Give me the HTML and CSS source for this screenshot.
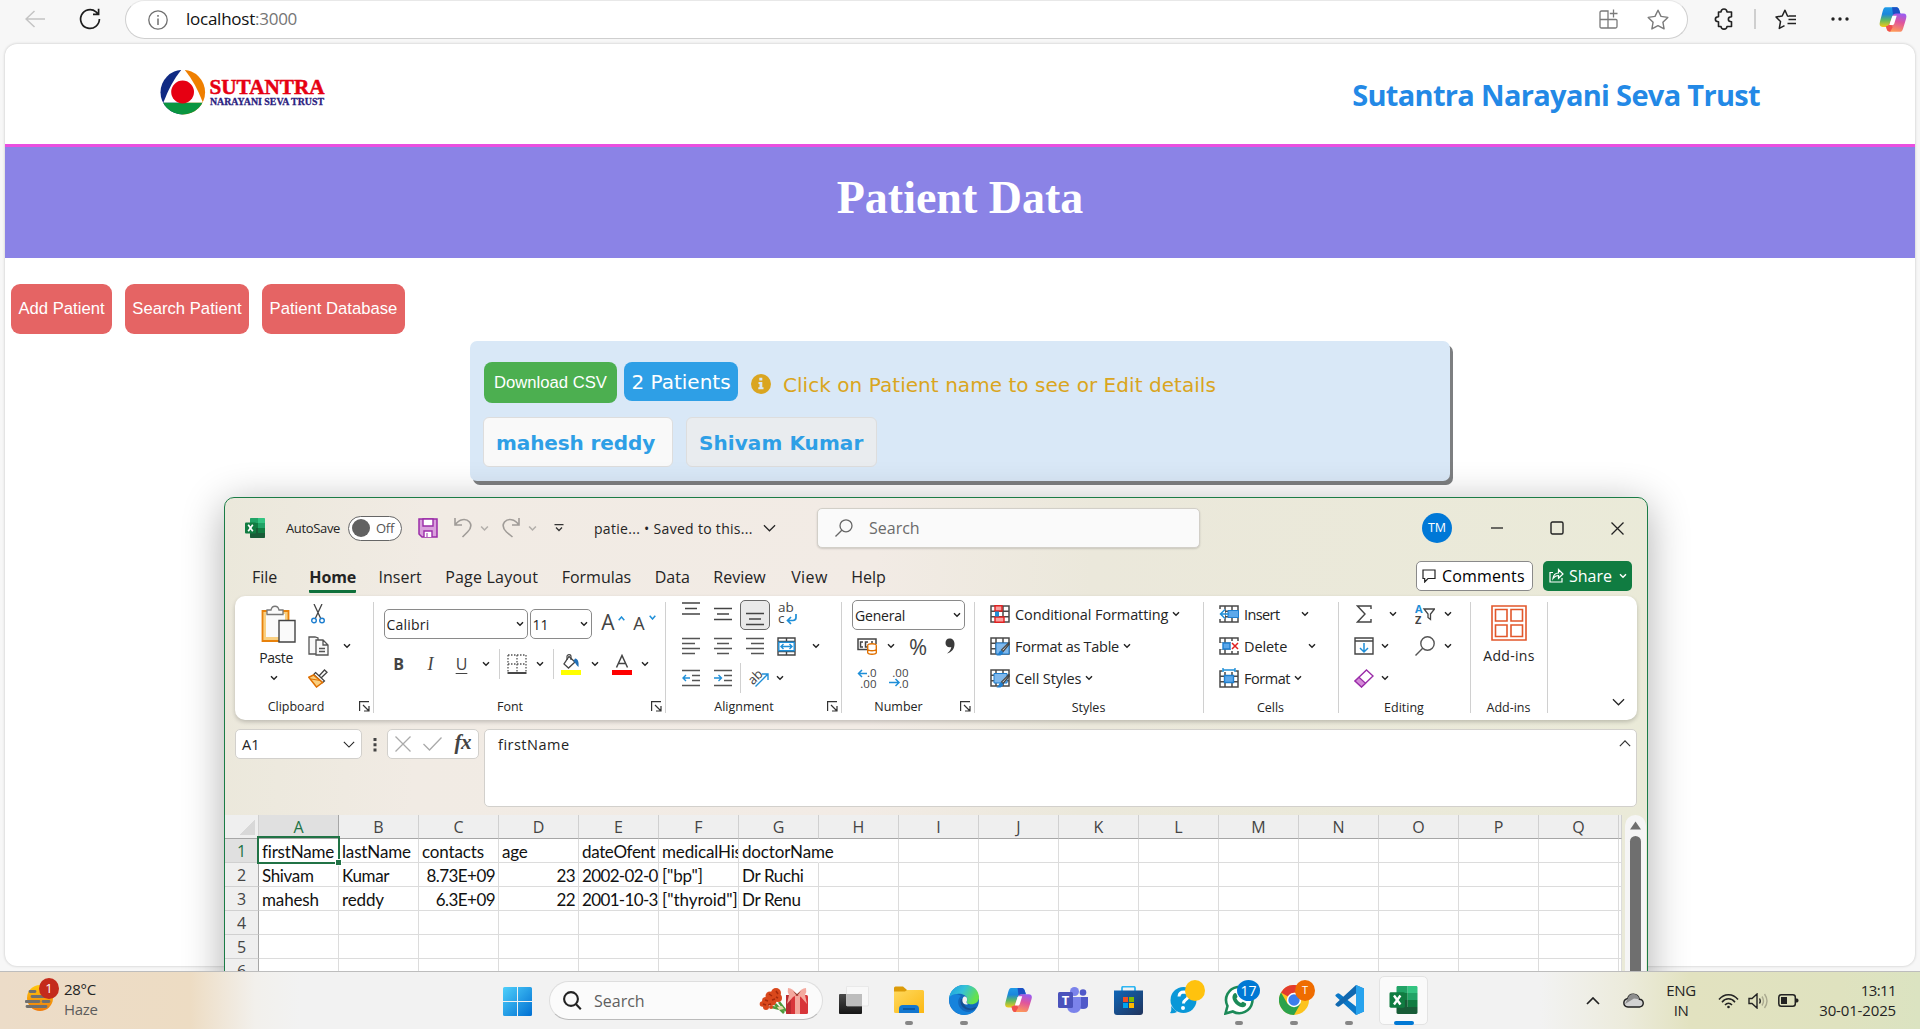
FILE: index.html
```html
<!DOCTYPE html>
<html lang="en">
<head>
<meta charset="utf-8">
<title>Patient Data</title>
<link rel="stylesheet" href="styles.css">
</head>
<body>
<svg class="defs" width="0" height="0">
  <defs>
    <linearGradient id="cpA" x1="0" y1="0" x2="0" y2="1"><stop offset="0" stop-color="#1f9be8"/><stop offset=".35" stop-color="#1a86dc"/><stop offset=".65" stop-color="#5fb962"/><stop offset="1" stop-color="#f4cb17"/></linearGradient>
    <linearGradient id="cpB" x1=".7" y1="0" x2=".4" y2="1"><stop offset="0" stop-color="#9b5cf0"/><stop offset=".45" stop-color="#e0559c"/><stop offset="1" stop-color="#ff9b57"/></linearGradient>
    <linearGradient id="win" x1="0" y1="0" x2="1" y2="1"><stop offset="0" stop-color="#4fd0fb"/><stop offset="1" stop-color="#006fd2"/></linearGradient>
    <linearGradient id="edA" x1="0" y1="0" x2="1" y2=".4"><stop offset="0" stop-color="#1b9de2"/><stop offset=".5" stop-color="#35c1d8"/><stop offset="1" stop-color="#66e24b"/></linearGradient>
    <linearGradient id="fold" x1="0" y1="0" x2="1" y2="1"><stop offset="0" stop-color="#ffd95e"/><stop offset="1" stop-color="#fcb813"/></linearGradient>
    <linearGradient id="store" x1="0" y1="0" x2="1" y2="1"><stop offset="0" stop-color="#0f66b8"/><stop offset="1" stop-color="#21345c"/></linearGradient>
    <linearGradient id="sun" x1="0" y1="0" x2="0" y2="1"><stop offset="0" stop-color="#ffc90e"/><stop offset="1" stop-color="#f07a0a"/></linearGradient>
    <linearGradient id="dark" x1="0" y1="0" x2="0" y2="1"><stop offset="0" stop-color="#4a4a4a"/><stop offset="1" stop-color="#161616"/></linearGradient>
  </defs>
  <symbol id="chev" viewBox="0 0 8 6"><path d="M1 1.2 4 4.3 7 1.2" fill="none" stroke="currentColor" stroke-width="1.4"/></symbol>
  <symbol id="chevL" viewBox="0 0 14 8"><path d="M1 1 7 7 13 1" fill="none" stroke="currentColor" stroke-width="1.3"/></symbol>
  <symbol id="launch" viewBox="0 0 11 11"><path d="M.6 10V.6H10M4 4l6 6M10 5v5H5" fill="none" stroke="#333" stroke-width="1.2"/></symbol>
  <symbol id="copilot" viewBox="0 0 30 28"><path d="M7 1h11c3 0 3.500 2 4.200 4.500L23 8h-5c-2 0-3 1-3.700 3l-2.300 7c-.8 2.500-2 4-4.500 4H4c-3 0-4-2-3-5.500L4 5C4.700 2.500 5.500 1 7 1Z" fill="url(#cpA)"/><path d="M18 1c3 0 3.500 2 4.200 4.500L23 8h-5c-2 0-3 1-3 1l-1-8Z" fill="#1c50c4"/><path d="M23 27H12c-3 0-3.500-2-4.200-4.500L7.500 21c2 0 3.500-1 4.200-3l3-8c.8-1.500 1.800-2.300 3.500-2.300H26c3 0 4 2 3 5.500L26 23c-.7 2.500-1.500 4-3 4Z" fill="url(#cpB)"/><path d="M12 27c-3 0-3.500-2-4.200-4.500L7.500 21c2 0 3.500-1 4.200-3l3 4Z" fill="#f0504e"/><path d="m14 11-3 9h3.500c1 0 1.500-.8 2-2l2.500-8h-3.500c-.8 0-1.200.3-1.500 1Z" fill="#fff"/></symbol>
  <symbol id="excel" viewBox="0 0 20 20"><path d="M6 0h7v5H5V1c0-.6.4-1 1-1Z" fill="#21a366"/><path d="M13 0h6c.6 0 1 .4 1 1v4h-7Z" fill="#33c481"/><path d="M5 5h8v5H5Z" fill="#107c41"/><path d="M13 5h7v5h-7Z" fill="#21a366"/><path d="M5 10h8v5H5Z" fill="#185c37"/><path d="M13 10h7v5h-7Z" fill="#107c41"/><path d="M5 15h15v4c0 .6-.4 1-1 1H6c-.6 0-1-.4-1-1Z" fill="#185c37"/><rect y="4.500" width="11" height="11" rx="1" fill="#107c41"/><path d="m3.200 6.800 4.600 6.400M7.800 6.800 3.200 13.200" stroke="#fff" stroke-width="1.700"/></symbol>
  <symbol id="grid" viewBox="0 0 20 18"><path d="M1 1h18v16H1ZM1 6.300h18M1 11.700h18M6 1v16M13 1v16" fill="#fff" stroke="#4a4a4a" stroke-width="1.500"/></symbol>
  <symbol id="brush" viewBox="0 0 14 14"><path d="M13.500.5 6 8l1.500 1.500L13.800 2Z" fill="#fff" stroke="#444" stroke-width="1.200"/><path d="M6 8.500c-2 0-2.500 1.500-3 3-.3.800-1.500 1.500-2.500 1.500 3 1.300 7 .5 7.200-2.800Z" fill="#1f7fd0"/></symbol>
</svg>

<main class="browser">
  <header class="toolbar">
    <svg class="back" width="20" height="18" viewBox="0 0 20 18" fill="none" stroke="#c4c4c4" stroke-width="1.500"><path d="M20 9H1M9.500 1 1 9l8.500 8"/></svg>
    <svg class="reload" width="22" height="22" viewBox="0 0 22 22" fill="none" stroke="#1c1c1c" stroke-width="1.700"><path d="M20.400 11A9.400 9.400 0 1 1 17 3.800L19.300 6M19.600.8v5.600H14"/></svg>
    <div class="address">
      <svg width="20" height="20" viewBox="0 0 20 20" fill="none" stroke="#707070" stroke-width="1.300"><circle cx="10" cy="10" r="9.200"/><path d="M10 8.500V15M10 5v1.800" stroke-width="1.500"/></svg>
      <span class="url">localhost<i>:3000</i></span>
      <svg class="apps" width="19" height="20" viewBox="0 0 19 20" fill="none" stroke="#7a7a7a" stroke-width="1.300"><path d="M9 19H2.500C1.500 19 1 18.500 1 17.500v-14C1 2.500 1.500 2 2.500 2H9v17ZM1 10.500h16c.6 0 1 .4 1 1v6c0 1-.5 1.500-1.500 1.500H9M14.500.5v8M10.800 4.500h7.700"/></svg>
      <svg width="22" height="21" viewBox="0 0 22 21" fill="none" stroke="#7a7a7a" stroke-width="1.400" stroke-linejoin="round"><path d="m11 1.200 3 6.200 6.800 1-4.900 4.800 1.200 6.700L11 16.700l-6.100 3.200 1.200-6.700L1.200 8.400l6.800-1Z"/></svg>
    </div>
    <svg class="puzzle" width="20" height="22" viewBox="0 0 20 22" fill="none" stroke="#222" stroke-width="1.600" stroke-linejoin="round"><path d="M4.500 4H7c.3-4 5.700-4 6 0h4.500v4.700c-4.200 0-4.200 5 0 5V18.500H13c-.3 3.500-5.700 3.500-6 0H4.500v-4.800c-4.200 0-4.200-5 0-5Z"/></svg>
    <i class="divider"></i>
    <svg class="favs" width="21" height="21" viewBox="0 0 21 21" fill="none" stroke="#222" stroke-width="1.500" stroke-linejoin="round"><path d="M14 7.300 12.500 7 10 1.200 7.200 7 1 8l4.500 4.600-1.200 6.800 5.200-2.800M13.500 10.500H21M12.500 14.500H21M14 7h7"/></svg>
    <svg class="dots" width="18" height="4" viewBox="0 0 18 4" fill="#222"><circle cx="2" cy="2" r="1.700"/><circle cx="9" cy="2" r="1.700"/><circle cx="16" cy="2" r="1.700"/></svg>
    <svg class="cp" width="28" height="27"><use href="#copilot"/></svg>
  </header>

  <section class="page">
    <div class="brand">
      <svg class="logo" width="166" height="46" viewBox="0 0 166 46">
        <clipPath id="disc"><circle cx="22.800" cy="22.200" r="22.300"/></clipPath>
        <g clip-path="url(#disc)"><path d="M0 0h22.500v46H0Z" fill="#102a83"/><path d="M22.500 0H46v46H22.500Z" fill="#ef7f00"/><path d="M22-1Q11 12 3.300 32.800h39.700Q35 12 24-1Z" fill="#fff"/><path d="M0 32.800h46V46H0Z" fill="#0a9640"/></g>
        <circle cx="22.600" cy="22" r="11.400" fill="#e60012"/>
        <text x="49.500" y="23.700" class="logo-a" textLength="115" lengthAdjust="spacingAndGlyphs">SUTANTRA</text>
        <text x="50" y="34.700" class="logo-b" textLength="114" lengthAdjust="spacingAndGlyphs">NARAYANI SEVA TRUST</text>
      </svg>
      <h2>Sutantra Narayani Seva Trust</h2>
    </div>
    <div class="banner"><h1>Patient Data</h1></div>
    <nav class="actions"><button class="add">Add Patient</button><button class="find">Search Patient</button><button class="base">Patient Database</button></nav>
    <div class="card">
      <div class="card-top">
        <button class="csv">Download CSV</button>
        <span class="count">2 Patients</span>
        <svg class="info" width="20" height="20" viewBox="0 0 20 20"><circle cx="10" cy="10" r="10" fill="#daa520"/><path d="M8.300 3.700h3v2.800h-3ZM7.500 8h3.800v5.300h1.200v2H7.300v-2h1.200V10h-1Z" fill="#d9e8f7"/></svg>
        <span class="hint">Click on Patient name to see or Edit details</span>
      </div>
      <div class="names"><span>mahesh reddy</span><span class="hover">Shivam Kumar</span></div>
    </div>
  </section>
</main>

<section class="window">
  <div class="titlebar">
    <svg class="xl" width="20" height="20"><use href="#excel"/></svg>
    <span class="autosave">AutoSave</span>
    <span class="toggle"><i></i>Off</span>
    <svg class="save" width="20" height="20" viewBox="0 0 20 20"><path d="M1 1h18v18H4l-3-3Z" fill="#d9a0dc" stroke="#9a2ca8" stroke-width="1.500"/><path d="M5 1h10v7H5ZM6 19v-6h8v6" fill="#fff" stroke="#9a2ca8" stroke-width="1.400"/><path d="M9 15v4" stroke="#9a2ca8"/></svg>
    <svg class="undo" width="18" height="20" viewBox="0 0 18 20" fill="none" stroke="#a09c98" stroke-width="1.600"><path d="M1 0v7h7M1.500 6.500C5 1 12 0 15.500 4c3 4 1 7-2 10l-5 5"/></svg>
    <svg class="c1 dim" width="9" height="7"><use href="#chev"/></svg>
    <svg class="undo" width="18" height="20" viewBox="0 0 18 20" fill="none" stroke="#a09c98" stroke-width="1.600"><path d="M17 0v7h-7M16.500 6.500C13 1 6 0 2.500 4c-3 4-1 7 2 10l6 5"/></svg>
    <svg class="c1 dim" width="9" height="7"><use href="#chev"/></svg>
    <svg class="qat" width="10" height="8" viewBox="0 0 10 8" fill="none" stroke="#333" stroke-width="1.300"><path d="M.5.7h9M2 3.500l3 3 3-3"/></svg>
    <span class="doc">patie... • Saved to this...</span>
    <svg class="docv" width="13" height="8"><use href="#chevL"/></svg>
    <div class="search"><svg width="18" height="18" viewBox="0 0 18 18" fill="none" stroke="#666" stroke-width="1.300"><circle cx="11" cy="6.800" r="6"/><path d="m6.800 11.200-6.300 6.300"/></svg>Search</div>
    <span class="avatar">TM</span>
    <svg class="wmin" width="12" height="14" viewBox="0 0 12 14" stroke="#222" stroke-width="1.300"><path d="M0 7h12"/></svg>
    <svg class="wmax" width="14" height="14" viewBox="0 0 14 14" fill="none" stroke="#222" stroke-width="1.400"><rect x="1" y="1" width="12" height="12" rx="1.500"/></svg>
    <svg class="wclose" width="13" height="13" viewBox="0 0 13 13" stroke="#222" stroke-width="1.300"><path d="m.5.5 12 12M12.500.5l-12 12"/></svg>
  </div>
  <div class="tabs">
    <span>File</span><b>Home</b><span>Insert</span><span class="wide">Page Layout</span><span>Formulas</span><span>Data</span><span class="review">Review</span><span class="view">View</span><span>Help</span>
    <button class="comments"><svg width="14" height="14" viewBox="0 0 14 14" fill="none" stroke="#222" stroke-width="1.200"><path d="M1 1h12v8.500H6L2.700 13V9.500H1Z"/></svg>Comments</button>
    <button class="share"><svg width="15" height="15" viewBox="0 0 15 15" fill="none" stroke="#fff" stroke-width="1.200"><path d="M4 4.500H1V14h12v-4M4 10.500c.5-4 2.500-5.500 5.500-5.500V1.500L14 6l-4.500 4.300V7.500C7 7.500 5.500 8.500 4 10.500Z"/></svg>Share<svg width="8" height="6"><use href="#chev"/></svg></button>
  </div>

  <div class="ribbon">
    <div class="group clipboard">
      <div class="body">
        <div class="paste">
          <svg width="35" height="39" viewBox="0 0 35 39"><path d="M1.500 6h26v30h-26Z" fill="#f9cf80" stroke="#e8820c" stroke-width="1.800"/><path d="M5 9h19v23H5Z" fill="#fafafa"/><path d="M6 9.500V5h4c1-5 7-5 8 0h4v4.500Z" fill="#fafafa" stroke="#777" stroke-width="1.300"/><path d="M18 15.500h16V37H18Z" fill="#fafafa" stroke="#444" stroke-width="1.400"/></svg>
          <span>Paste</span>
          <svg width="8" height="6"><use href="#chev"/></svg>
        </div>
        <div class="stack">
          <div class="row"><i class="w32"><svg width="14" height="20" viewBox="0 0 14 20" fill="none"><path d="M3 0l6.500 14M11 0 4.500 14" stroke="#444" stroke-width="1.300"/><circle cx="3" cy="16.500" r="2.300" stroke="#1f7fd0" stroke-width="1.400"/><circle cx="11" cy="16.500" r="2.300" stroke="#1f7fd0" stroke-width="1.400"/></svg></i></div>
          <div class="row"><i class="w32"><svg width="21" height="20" viewBox="0 0 21 20" fill="#fafafa" stroke="#555" stroke-width="1.300"><path d="M1 1h6l3 1v16H1Z"/><path d="M8 4h7l5 5v10H8ZM15 4v5h5M11 12.500h6M11 15.500h6"/></svg></i><i class="w26"><svg width="8" height="6"><use href="#chev"/></svg></i></div>
          <div class="row"><i class="w32"><svg width="20" height="19" viewBox="0 0 20 19"><path d="m11 7 5.500-6L19 3.200 13 9" fill="#fff" stroke="#444" stroke-width="1.300"/><path d="m7.500 3.500 9 8.500-2 1.800-8.800-8.300Z" fill="#fff" stroke="#444" stroke-width="1.200"/><path d="M5.500 6 .8 8.200 8.500 18l6-4.500Z" fill="#f9cf80" stroke="#e07000" stroke-width="1.500"/><path d="m3 10 9.500 1.500" stroke="#e07000"/></svg></i></div>
        </div>
      </div>
      <div class="foot"><span>Clipboard</span><svg width="11" height="11"><use href="#launch"/></svg></div>
    </div>

    <div class="group font">
      <div class="body col">
        <div class="row r1"><span class="box fam">Calibri<svg width="8" height="6"><use href="#chev"/></svg></span><span class="box size">11<svg width="8" height="6"><use href="#chev"/></svg></span><i class="w36 big">A<svg class="sup" width="7" height="5" viewBox="0 0 7 5"><path d="M.7 4.200 3.500 1l2.800 3.200" fill="none" stroke="#1f8fd8" stroke-width="1.500"/></svg></i><i class="w28 mid">A<svg class="sup" width="7" height="5" viewBox="0 0 7 5"><path d="M.7.800 3.500 4 6.300.800" fill="none" stroke="#1f8fd8" stroke-width="1.500"/></svg></i></div>
        <div class="row r2"><i class="w30 bold">B</i><i class="w34 ital">I</i><i class="w28 und">U</i><i class="w20"><svg width="8" height="6"><use href="#chev"/></svg></i><i class="vs w7"></i>
          <i class="w28"><svg width="20" height="20" viewBox="0 0 20 20" fill="none" stroke="#555" stroke-width="1.300"><path d="M1 1h18v18M1 1v18M10 1v18M1 10h18" stroke-dasharray="1.500 1.500"/><path d="M.5 19h19" stroke="#333" stroke-width="1.800"/></svg></i><i class="w18"><svg width="8" height="6"><use href="#chev"/></svg></i><i class="vs w9"></i>
          <i class="w26"><svg width="20" height="21" viewBox="0 0 20 21"><path d="m8 2.500 6 5.500-6.500 6L3 10Z" fill="#fff" stroke="#444" stroke-width="1.300"/><path d="M6 6V2.500C6 0 10 0 10 2.500V6" fill="none" stroke="#444" stroke-width="1.200"/><path d="M14 4.500c3.500.5 4 4.500 3.500 8.500-2-1.500-3-4-5-6Z" fill="#1f6fb8"/><path d="M0 16h20v5H0Z" fill="#ffff00"/></svg></i><i class="w22"><svg width="8" height="6"><use href="#chev"/></svg></i>
          <i class="w32"><svg width="20" height="21" viewBox="0 0 20 21"><path d="M4.500 13.500 10 1.500l5.500 12M6.500 9.500h7" fill="none" stroke="#444" stroke-width="1.500"/><path d="M0 16h20v5H0Z" fill="#f00"/></svg></i><i class="w14"><svg width="8" height="6"><use href="#chev"/></svg></i></div>
      </div>
      <div class="foot"><span>Font</span><svg width="11" height="11"><use href="#launch"/></svg></div>
    </div>

    <div class="group align">
      <div class="body col">
        <div class="row"><i class="w32 up"><svg width="18" height="14" viewBox="0 0 18 14" stroke="#444" stroke-width="1.400"><path d="M0 1h18M3 6.500h12M0 12h18"/></svg></i><i class="w32"><svg width="18" height="14" viewBox="0 0 18 14" stroke="#444" stroke-width="1.400"><path d="M0 1.500h18M3 7h12M0 12.500h18"/></svg></i><i class="w32"><b class="sel"><svg width="18" height="14" viewBox="0 0 18 14" stroke="#444" stroke-width="1.400"><path d="M0 1.500h18M3 7h12M0 12.500h18"/></svg></b></i><i class="w32"><span class="wrap">ab<br>c</span><svg class="wraparrow" width="11" height="11" viewBox="0 0 11 11" fill="none" stroke="#1f8fd8" stroke-width="1.700"><path d="M10 0v3.500c0 2-1 3-3 3H1.500M5 3 1.500 6.500 5 10"/></svg></i></div>
        <div class="row"><i class="w32"><svg width="18" height="18" viewBox="0 0 18 18" stroke="#555" stroke-width="1.400"><path d="M0 1.500h18M0 6.500h13M0 11.500h18M0 16.500h13"/></svg></i><i class="w32"><svg width="18" height="18" viewBox="0 0 18 18" stroke="#555" stroke-width="1.400"><path d="M0 1.500h18M3 6.500h12M0 11.500h18M3 16.500h12"/></svg></i><i class="w32"><svg width="18" height="18" viewBox="0 0 18 18" stroke="#555" stroke-width="1.400"><path d="M0 1.500h18M5 6.500h13M0 11.500h18M5 16.500h13"/></svg></i><i class="w32"><svg width="19" height="19" viewBox="0 0 19 19" fill="#fff" stroke="#444" stroke-width="1.400"><path d="M1 1h17v17H1ZM1 4.500h17M1 14.500h17M9.500 1v3.500M9.500 14.500V18"/><path d="M1.800 5.200h15.400v8.600H1.800ZM4 9.500h11M6.500 7 4 9.500 6.500 12M12.500 7 15 9.500 12.500 12" stroke="#1f8fd8"/></svg></i><i class="w26"><svg width="8" height="6"><use href="#chev"/></svg></i></div>
        <div class="row"><i class="w32"><svg width="18" height="18" viewBox="0 0 18 18" stroke="#555" stroke-width="1.400" fill="none"><path d="M0 1.500h18M10 6.500h8M10 11.500h8M0 16.500h18"/><path d="M8 9H1.500M4 6 1 9l3 3" stroke="#1f8fd8"/></svg></i><i class="w32"><svg width="18" height="18" viewBox="0 0 18 18" stroke="#555" stroke-width="1.400" fill="none"><path d="M0 1.500h18M10 6.500h8M10 11.500h8M0 16.500h18"/><path d="M0 9h7M4.500 6l3 3-3 3" stroke="#1f8fd8"/></svg></i><i class="vs w4"></i><i class="w30"><span class="rot">ab</span><svg class="rotarrow" width="14" height="14" viewBox="0 0 14 14" fill="none" stroke="#1f8fd8" stroke-width="1.400"><path d="M.5 13.500 13 1M7 1h6v6"/></svg></i><i class="w14"><svg width="8" height="6"><use href="#chev"/></svg></i></div>
      </div>
      <div class="foot"><span>Alignment</span><svg width="11" height="11"><use href="#launch"/></svg></div>
    </div>

    <div class="group number">
      <div class="body col">
        <div class="row"><span class="box gen">General<svg width="8" height="6"><use href="#chev"/></svg></span></div>
        <div class="row"><i class="w30"><svg width="20" height="18" viewBox="0 0 20 18" fill="none" stroke="#444" stroke-width="1.500"><path d="M10 12.500H1V2h18v5M6 5H3.500v5H6M11 5H8.500v5H10M16 5h-2"/><ellipse cx="15" cy="8.500" rx="4.300" ry="1.800" fill="#fff" stroke="#e07000" stroke-width="1.400"/><path d="M10.700 8.500v7c0 2.300 8.600 2.300 8.600 0v-7M10.700 12c0 2.300 8.600 2.300 8.600 0" fill="#fff" stroke="#e07000" stroke-width="1.400"/></svg></i><i class="w18"><svg width="8" height="6"><use href="#chev"/></svg></i><i class="w36 pct">%</i><i class="w28"><svg width="10" height="16" viewBox="0 0 10 16"><path d="M4.500.5C7.500.5 9.500 2.500 9.500 6c0 5-3 8.500-7.500 9.500 2.500-2 4-4 4.300-6.500C3 10 .5 8 .5 5 .5 2.500 2 .5 4.500.5Z" fill="#3a3a3a"/></svg></i></div>
        <div class="row"><i class="w30"><svg class="dec" width="20" height="22" viewBox="0 0 20 22"><path d="M10 6.500H1.500M5 3 1.500 6.500 5 10" fill="none" stroke="#1f8fd8" stroke-width="1.500"/><text x="19.500" y="10" text-anchor="end">.0</text><text x="19.500" y="20.500" text-anchor="end">.00</text></svg></i><i class="w34"><svg class="dec" width="20" height="22" viewBox="0 0 20 22"><path d="M0 15.500h9.500M6.500 12l3.500 3.500L6.500 19" fill="none" stroke="#1f8fd8" stroke-width="1.500"/><text x="19.500" y="10" text-anchor="end">.00</text><text x="19.500" y="20.500" text-anchor="end">.0</text></svg></i></div>
      </div>
      <div class="foot"><span>Number</span><svg width="11" height="11"><use href="#launch"/></svg></div>
    </div>

    <div class="group styles">
      <div class="body col">
        <div class="row"><svg width="20" height="18" viewBox="0 0 20 18"><use href="#grid" width="20" height="18"/><path d="M5 .700h7v5.300H5ZM5 12h9v5.300H5Z" fill="#f7a0a0" stroke="#e02020" stroke-width="1.400"/><path d="M5 6.500h4v5H5Z" fill="#1f8fd8"/></svg><span>Conditional Formatting</span><svg width="8" height="6"><use href="#chev"/></svg></div>
        <div class="row"><svg width="20" height="19" viewBox="0 0 20 19"><use href="#grid" width="20" height="18"/><path d="M6 6h13v11H6Z" fill="#7fb8ec" stroke="#1f7fd0"/><use href="#brush" x="5" y="5" width="15" height="14"/></svg><span class="fat">Format as Table</span><svg width="8" height="6"><use href="#chev"/></svg></div>
        <div class="row"><svg width="20" height="19" viewBox="0 0 20 19"><use href="#grid" width="20" height="18"/><path d="M4 4.500h13V14H4Z" fill="#7fb8ec" stroke="#1f7fd0"/><use href="#brush" x="5" y="5" width="15" height="14"/></svg><span>Cell Styles</span><svg width="8" height="6"><use href="#chev"/></svg></div>
      </div>
      <div class="foot plain"><span>Styles</span></div>
    </div>

    <div class="group cells">
      <div class="body col">
        <div class="row"><svg width="20" height="18" viewBox="0 0 20 18"><use href="#grid" width="20" height="18"/><path d="M9 5.500h10.500v7H9Z" fill="#5da8ea" stroke="#1f7fd0"/><path d="M0 4h6v10H0Z" fill="#fff"/><path d="M10 9H1.500M6 4.500 1.500 9 6 13.500" fill="none" stroke="#1f8fd8" stroke-width="1.500"/></svg><span class="ins">Insert</span><svg class="far" width="8" height="6"><use href="#chev"/></svg></div>
        <div class="row"><svg width="20" height="18" viewBox="0 0 20 18"><use href="#grid" width="20" height="18"/><path d="M0 6h20v6H0Z" fill="#fff"/><path d="M4 6h7v6H4Z" fill="#5da8ea" stroke="#1f7fd0" stroke-width="1.400"/><path d="M12 4h8v10h-8Z" fill="#fff"/><path d="m13 6 6 6M19 6l-6 6" stroke="#e02020" stroke-width="1.500"/></svg><span>Delete</span><svg class="far" width="8" height="6"><use href="#chev"/></svg></div>
        <div class="row"><svg width="20" height="20" viewBox="0 0 20 20"><use href="#grid" y="2" width="20" height="18"/><path d="M5.500 7.500h9v7h-9Z" fill="#5da8ea" stroke="#1f7fd0" stroke-width="1.400"/><path d="M3.500 0h13v4h-13Z" fill="#fff"/><path d="M4 2h12M4 0v4M16 0v4" stroke="#1f8fd8" stroke-width="1.400"/></svg><span class="fmt">Format</span><svg width="8" height="6"><use href="#chev"/></svg></div>
      </div>
      <div class="foot plain"><span>Cells</span></div>
    </div>

    <div class="group editing">
      <div class="body col">
        <div class="row"><i class="w28"><svg width="16" height="18" viewBox="0 0 16 18" fill="none" stroke="#444" stroke-width="1.400"><path d="M15 4V1H1.500L9 9l-7.500 8H15v-3"/></svg></i><i class="w30"><svg width="8" height="6"><use href="#chev"/></svg></i><i class="w34"><svg class="az" width="20" height="22" viewBox="0 0 20 22"><text x="0" y="9.500" fill="#1f8fd8">A</text><text x="0" y="21" fill="#444">Z</text><path d="M9 6h10.500l-4 5v5.500l-2.500-2V11Z" fill="none" stroke="#444" stroke-width="1.300"/></svg></i><i class="w12"><svg width="8" height="6"><use href="#chev"/></svg></i></div>
        <div class="row"><i class="w28"><svg width="20" height="18" viewBox="0 0 20 18" fill="#fff" stroke="#444" stroke-width="1.400"><path d="M1 1h18v16H1ZM1 4h18"/><path d="M10 6v8.500M6 11l4 4 4-4" fill="none" stroke="#1f8fd8" stroke-width="1.500"/></svg></i><i class="w14"><svg width="8" height="6"><use href="#chev"/></svg></i><i class="w16"></i><i class="w34"><svg width="20" height="20" viewBox="0 0 20 20" fill="none" stroke="#555" stroke-width="1.400"><circle cx="12.500" cy="7.500" r="6.700"/><path d="M7.700 12.300.500 19.500"/></svg></i><i class="w12"><svg width="8" height="6"><use href="#chev"/></svg></i></div>
        <div class="row"><i class="w28"><svg width="20" height="19" viewBox="0 0 20 19"><path d="M12.500 1 19 7 7.500 18 1 12Z" fill="#fff" stroke="#9a2ca8" stroke-width="1.400"/><path d="m5 8.200 6.500 6L7.500 18 1 12Z" fill="#d48ad8" stroke="#9a2ca8" stroke-width="1.200"/></svg></i><i class="w14"><svg width="8" height="6"><use href="#chev"/></svg></i></div>
      </div>
      <div class="foot plain"><span>Editing</span></div>
    </div>

    <div class="group addins">
      <div class="body">
        <svg width="36" height="36" viewBox="0 0 36 36" fill="none" stroke="#e2572b" stroke-width="1.600"><path d="M1 1h34v34H1ZM4.500 4.500h11.500v11.500H4.500ZM20 4.500h11.500v11.500H20ZM4.500 20h11.500v11.500H4.500ZM20 20h11.500v11.500H20Z"/></svg>
        <span>Add-ins</span>
      </div>
      <div class="foot plain"><span>Add-ins</span></div>
    </div>
    <svg class="collapse" width="13" height="8"><use href="#chevL"/></svg>
  </div>

  <div class="formula">
    <span class="fbox name">A1<svg width="12" height="7"><use href="#chevL"/></svg></span>
    <svg class="vdots" width="4" height="14" viewBox="0 0 4 14" fill="#444"><path d="M.5 0h3v3h-3ZM.5 5.300h3v3h-3ZM.5 10.600h3v3h-3Z"/></svg>
    <span class="fbox fx"><svg width="16" height="16" viewBox="0 0 16 16" stroke="#aaa" stroke-width="1.300"><path d="m.5.5 15 15M15.500.5l-15 15"/></svg><svg width="19" height="14" viewBox="0 0 19 14" fill="none" stroke="#aaa" stroke-width="1.300"><path d="m.5 7 6 6L18.500.5"/></svg><em>fx</em></span>
    <span class="fbox input">firstName<svg width="12" height="7" viewBox="0 0 14 8"><path d="m1 7 6-6 6 6" fill="none" stroke="#333" stroke-width="1.400"/></svg></span>
  </div>

  <div class="sheet">
    <table>
      <thead><tr><th class="corner"></th><th class="on">A</th><th>B</th><th>C</th><th>D</th><th>E</th><th>F</th><th>G</th><th>H</th><th>I</th><th>J</th><th>K</th><th>L</th><th>M</th><th>N</th><th>O</th><th>P</th><th>Q</th><th class="last"></th></tr></thead>
      <tbody>
        <tr><th class="on">1</th><td class="cur">firstName</td><td>lastName</td><td>contacts</td><td>age</td><td class="t">dateOfent</td><td>medicalHis</td><td class="spill">doctorName</td><td></td><td></td><td></td><td></td><td></td><td></td><td></td><td></td><td></td><td></td><td></td></tr>
        <tr><th>2</th><td class="t">Shivam</td><td class="t">Kumar</td><td class="n">8.73E+09</td><td class="n">23</td><td class="d">2002-02-0</td><td>["bp"]</td><td class="t">Dr Ruchi</td><td></td><td></td><td></td><td></td><td></td><td></td><td></td><td></td><td></td><td></td><td></td></tr>
        <tr><th>3</th><td>mahesh</td><td>reddy</td><td class="n">6.3E+09</td><td class="n">22</td><td class="d">2001-10-3</td><td class="w">["thyroid"]</td><td class="t">Dr Renu</td><td></td><td></td><td></td><td></td><td></td><td></td><td></td><td></td><td></td><td></td><td></td></tr>
        <tr><th>4</th><td></td><td></td><td></td><td></td><td></td><td></td><td></td><td></td><td></td><td></td><td></td><td></td><td></td><td></td><td></td><td></td><td></td><td></td></tr>
        <tr><th>5</th><td></td><td></td><td></td><td></td><td></td><td></td><td></td><td></td><td></td><td></td><td></td><td></td><td></td><td></td><td></td><td></td><td></td><td></td></tr>
        <tr><th>6</th><td></td><td></td><td></td><td></td><td></td><td></td><td></td><td></td><td></td><td></td><td></td><td></td><td></td><td></td><td></td><td></td><td></td><td></td></tr>
      </tbody>
    </table>
    <div class="scroll"><svg width="11" height="9" viewBox="0 0 11 9"><path d="M5.500.5 11 8.500H0Z" fill="#6f6f6f"/></svg><i></i></div>
  </div>
</section>

<footer class="taskbar">
  <div class="weather">
    <svg width="34" height="34" viewBox="0 0 34 34"><circle cx="15" cy="20" r="13" fill="url(#sun)"/><path d="M5 13.500h5M7 18.500h20M1 23.500h13M18 23.500h6M2 28.500h19" stroke="#71706e" stroke-width="2.800" stroke-linecap="round"/></svg>
    <b class="badge red">1</b>
    <div><span>28°C</span><span class="soft">Haze</span></div>
  </div>
  <div class="start"><svg width="29" height="29" viewBox="0 0 29 29"><path d="M1.500 0H14v14H0V1.500Q0 0 1.500 0ZM15 0h12.500Q29 0 29 1.500V14H15ZM0 15h14v14H1.500Q0 29 0 27.500ZM15 15h14v12.500q0 1.500-1.500 1.500H15Z" fill="url(#win)"/></svg></div>
  <div class="tsearch">
    <svg width="19" height="19" viewBox="0 0 19 19" fill="none" stroke="#222" stroke-width="2.100"><circle cx="8" cy="8" r="6.900"/><path d="m12.800 13 5 5.200"/></svg>
    <span>Search</span>
    <svg class="gift" width="50" height="28" viewBox="0 0 50 28"><path d="m16 17 9 9M20 15l7 9M13 20l12 3" stroke="#4f9a3c" stroke-width="2.500"/><path d="m18 20 5-1 2 3-5 1Z" fill="#e8d9a8"/><g fill="#d9481c"><circle cx="17" cy="6" r="5"/><circle cx="11" cy="9" r="4.500"/><circle cx="7" cy="14" r="4"/><circle cx="3.500" cy="17" r="2.800"/><circle cx="19" cy="11" r="4"/><circle cx="13" cy="14" r="4.500"/><circle cx="7" cy="20" r="3"/><circle cx="12" cy="20" r="2"/></g><path d="M10 7l3 2M17 4l2 3M6 13l3 1M13 13l3-1M4 17l3 1M17 10l2 1M9 18l3-1" stroke="#a62a0c" stroke-width="1.500"/><rect x="27" y="8" width="22" height="19" rx="1.500" fill="#d8363a"/><path d="M27 8h5v19h-4q-1 0-1-1Z" fill="#b92a30"/><path d="M36 9h5v18h-5Z" fill="#f3a79c"/><path d="M38 8q-4-7-9-7-1 4 1 7l-2 9 6-7 4-2 4 2 6 7-2-9q2-3 1-7-5 0-9 7Z" fill="#f4a99e"/><path d="m34 4 4 3 4-3-4 5Z" fill="#8f3b2c"/></svg>
  </div>
  <div class="apps-row">
    <div><svg width="30" height="28" viewBox="0 0 30 28"><rect y="8" width="23" height="20" rx="1" fill="url(#dark)"/><rect x="7.500" y=".3" width="22" height="19.700" rx="1" fill="#f8f8f8" stroke="#dcdcdc" stroke-width=".6"/><path d="M7.500 8H23v12H7.500Z" fill="#bdbdbd"/></svg></div>
    <div class="run"><svg width="30" height="28" viewBox="0 0 30 28"><path d="M0 2q0-1.500 1.500-1.500H9L13 4v4H0Z" fill="#dc9b08"/><path d="M0 5.500h11L13 4h15.500Q30 4 30 5.500V27H1.500Q0 27 0 25.500Z" fill="url(#fold)"/><path d="M5 27v-4q0-4 4-4h12q4 0 4 4v4Z" fill="#1377cf"/><path d="M9 23h12" stroke="#0a4f96" stroke-width="1.500"/></svg></div>
    <div class="run"><svg width="30" height="30" viewBox="0 0 30 30"><circle cx="15" cy="15" r="15" fill="#1268bd"/><path d="M0 14C1-4 29-5 30 12c0 6-5 8-10 7-4-1-1-2-2-6-1-3-6-5-10-4-4 1-7 3-8 5Z" fill="url(#edA)"/><path d="M0 14c1-5 8-6 12-3-5 4-3 12 3 15 4 2 8 1 12-2-4 6-12 7-17 5C3 26 0 20 0 14Z" fill="#1683dc"/><path d="M12 14c-2 6 3 11 9 11 3 0 5-1 6-2 1-1-1-1-2-.5-4 2-9 .5-10-3.500-.500-2-.500-3.500.500-5Z" fill="#154f92"/><path d="M15 11.500c2.500-.5 3.500 1.500 3 4-.5 1.500-1 2.500 1 3.500-2 1.500-5 0-5.500-2.500-.3-2 0-4 1.500-5Z" fill="#f2f2f2"/></svg></div>
    <div><svg width="29" height="26"><use href="#copilot"/></svg></div>
    <div><svg width="31" height="26" viewBox="0 0 31 26"><circle cx="16.500" cy="4.500" r="4.500" fill="#7b83eb"/><circle cx="25" cy="5.500" r="3.300" fill="#5059c9"/><path d="M19 10h11v8q0 4-5 4t-6-4Z" fill="#5059c9"/><path d="M9 10h14v8q0 8-7 8t-7-8Z" fill="#7b83eb"/><rect y="5" width="15" height="16" rx="1.500" fill="#4b53bc"/><text x="7.500" y="17.500" class="tt" text-anchor="middle">T</text></svg></div>
    <div><svg width="29" height="29" viewBox="0 0 29 29"><path d="M8 6V2q0-1.300 1.300-1.300h10.400Q21 .700 21 2v4" fill="none" stroke="#2fb6f2" stroke-width="1.800"/><path d="M0 4.500h29V26q0 3-3 3H3q-3 0-3-3Z" fill="url(#store)"/><path d="M9 11h5v5H9Z" fill="#f25022"/><path d="M15 11h5v5h-5Z" fill="#7fba00"/><path d="M9 17h5v5H9Z" fill="#00a4ef"/><path d="M15 17h5v5h-5Z" fill="#ffb900"/></svg></div>
    <div><svg width="27" height="28" viewBox="0 0 27 28"><circle cx="13.500" cy="14" r="13" fill="#0a98d8"/><path d="M0 27q2-2 1-7l6 6Q3 28 0 27Z" fill="#0a98d8"/><path d="M9 10.500q.3-4.500 5-4.500 4.500.3 4.300 4-.2 2.500-2.800 4-2 1.300-2 3.500" fill="none" stroke="#fff" stroke-width="3"/><circle cx="13" cy="22" r="2" fill="#fff"/></svg><b class="badge yellow"></b></div>
    <div class="run"><svg width="30" height="30" viewBox="0 0 30 30"><path d="M1.500 28.500 3.500 21A13.200 13.200 0 1 1 8.800 26.500Z" fill="#fff" stroke="#1c8a58" stroke-width="2.600"/><path d="M10 8.500c1-1 2-.5 2.500.5l1 2.500c0 1-1 1.500-1 2 1 2 2.500 3.500 4.500 4.500.7 0 1.200-1.500 2-1.200l2.800 1.400c.7.500.4 2-.3 2.800C20 22.500 18 22.600 15.500 21.500c-3-1.300-5.500-4-6.700-7C8 12 8.500 10 10 8.500Z" fill="#1c8a58"/></svg><b class="badge blue">17</b></div>
    <div class="run"><svg width="30" height="30" viewBox="0 0 30 30"><circle cx="15" cy="15" r="15" fill="#fcc31e"/><path d="M15 15 2 7.500A15 15 0 0 1 28 7.500H15Z" fill="#e33b2e"/><path d="M2 7.500A15 15 0 0 0 15 30l6.500-11.300L15 15 8.500 18.800Z" fill="#2ba24c"/><circle cx="15" cy="15" r="7.200" fill="#fff"/><circle cx="15" cy="15" r="5.700" fill="#3b7ded"/></svg><b class="badge orange">T</b></div>
    <div class="run"><svg width="30" height="30" viewBox="0 0 30 30"><path d="m22 0 8 3.500v23L22 30 2.500 12q-2-1.500-.5-2.500l1.500-1q1-.5 2 .2L22 21.500Z" fill="#0a78c8"/><path d="M22 8.500 5.500 21.300q-1 .7-2 .2L2 20.500Q.500 19.500 2.500 18L22 0Z" fill="#1068b0"/><path d="m22 0 8 3.500v23L22 30Z" fill="#27a3ee"/></svg></div>
    <div class="active"><svg width="29" height="28"><use href="#excel"/></svg></div>
  </div>
  <div class="tray">
    <i class="w40"><svg width="14" height="8" viewBox="0 0 14 8"><path d="m1 7 6-6 6 6" fill="none" stroke="#222" stroke-width="1.700"/></svg></i>
    <i class="w40 cloud"><svg width="21" height="15" viewBox="0 0 21 15"><path d="M5 14h11.500c5.500-1 4.500-7.500-.2-7.800C15-.5 6-.5 4.800 5.500-.500 6.500-.500 13.500 5 14Z" fill="#d2d2d2" stroke="#222" stroke-width="1.400"/><path d="M2 11 4.800 5.500C6-.500 15-.500 16.300 6.200L11 5.500Z" fill="#8d8d8d"/></svg></i>
    <div class="lang"><span>ENG</span><span>IN</span></div>
    <i class="w38"><svg width="21" height="16" viewBox="0 0 21 16" fill="none" stroke="#222" stroke-width="1.500"><path d="M1 6.500c5-6.500 14-6.500 19 0M4 9.200c3.500-4.600 9.500-4.600 13 0M7 12c2-2.500 5-2.500 7 0"/><circle cx="10.500" cy="14" r="1.300" fill="#222" stroke="none"/></svg></i>
    <i class="w22"><svg width="20" height="16" viewBox="0 0 20 16" fill="none" stroke="#222" stroke-width="1.400"><path d="M1 5.500h3L9 1v14l-5-4.500H1ZM11.500 5.500q1.500 2.500 0 5"/><path d="M14 3.500q3 4.500 0 9M16.500 1q5 7 0 14" stroke="#aaa990"/></svg></i>
    <i class="w38"><svg width="21" height="13" viewBox="0 0 21 13"><rect x=".8" y=".8" width="16.500" height="11.400" rx="2.500" fill="none" stroke="#222" stroke-width="1.500"/><rect x="3" y="3" width="6" height="7" fill="#222"/><path d="M18 4.500h1q1.500 0 1.500 2t-1.500 2h-1Z" fill="#222"/></svg></i>
    <div class="clock"><span class="time">13:11</span><span>30-01-2025</span></div>
  </div>
</footer>
</body>
</html>
```
FILE: styles.css
```css
* { box-sizing: border-box; }
body {
  margin: 0; width: 1920px; height: 1029px; overflow: hidden; position: relative;
  display: flex; flex-direction: column;
  font-family: "Open Sans", "Noto Sans", sans-serif; color: #242424; background: #f7f7f7;
}
svg { display: block; flex: none; }
i { font-style: normal; }
button { border: 0; margin: 0; padding: 0; font: inherit; }
.defs { position: absolute; }

/* browser chrome */
.browser { height: 971px; flex: none; }
.toolbar { height: 44px; padding-left: 25px; display: flex; align-items: flex-start; }
.back { margin-top: 10px; }
.reload { margin: 8px 24px 0 34px; }
.address {
  width: 1563px; height: 39px; border: 1px solid #cfcfcf; border-top-color: #e8e8e8; border-bottom-width: 1.500px; border-radius: 20px;
  background: #fff; display: flex; align-items: center; padding: 0 18px 0 22px;
}
.url { font-size: 17px; letter-spacing: -.25px; margin-left: 18px; margin-top: -2px; flex: 1; color: #111; }
.url i { color: #757575; }
.apps { margin-right: 29px; margin-top: -1px; }
.puzzle { margin: 8px 0 0 26px; }
.divider { width: 1.500px; height: 20px; background: #cfcfcf; margin: 9px 0 0 20px; }
.favs { margin: 9px 0 0 19px; }
.dots { margin: 17px 0 0 35px; }
.cp { margin: 6px 0 0 30px; }

/* web page */
.page { margin: 0 5px; height: 922px; background: #fff; border-radius: 12px; box-shadow: 0 0 3px rgba(0,0,0,.22); }
.brand { height: 100px; display: flex; justify-content: space-between; padding: 0 155px 0 155px; }
.logo { margin-top: 26px; }
.logo-a { font: 700 20.500px "Liberation Serif", serif; fill: #e60012; stroke: #e60012; stroke-width: .5px; }
.logo-b { font: 700 10px "Liberation Serif", serif; fill: #2a2180; stroke: #2a2180; stroke-width: .3px; }
.brand h2 { margin: 31px 0 0; font-size: 29px; line-height: 40px; letter-spacing: -.68px; font-weight: 700; color: #2389e6; }
.banner { height: 114px; border-top: 3px solid #ea4fe0; background: #8b83e6; text-align: center; }
.banner h1 { margin: 0; padding-top: 24px; font: 700 46px/53px "Liberation Serif", serif; color: #fff; }
.actions { display: flex; gap: 13px; padding: 26px 0 0 6px; }
.actions button { height: 50px; border-radius: 9px; background: #e56464; color: #fff; font: 16.670px "Liberation Sans", sans-serif; }
.add { width: 101px; }
.find { width: 124px; }
.base { width: 143px; }
.card { width: 980px; height: 140px; margin: 7px 0 0 465px; padding: 21px 14px; border-radius: 7px; background: #d9e8f7; box-shadow: 3px 4px 0 #7d7f81; font-family: "DejaVu Sans", sans-serif; font-size: 20px; }
.card-top { display: flex; align-items: flex-start; }
.csv { width: 133px; height: 41px; border-radius: 8px; background: #4caf50; color: #fff; font: 16.670px "Liberation Sans", sans-serif; }
.count { margin-left: 7px; width: 114px; height: 39px; line-height: 41px; border-radius: 8px; background: #2e9fe6; color: #fff; text-align: center; }
.info { margin: 12px 12px 0 13px; }
.hint { line-height: 24px; margin-top: 11px; color: #daa520; white-space: nowrap; letter-spacing: .05px; }
.names { display: flex; gap: 13px; margin-top: 14px; margin-left: -1px; }
.names span { width: 190px; height: 50px; line-height: 50px; padding-left: 12px; border: 1px solid #ddd; border-radius: 6px; background: #f9f9f9; color: #2e9fe6; font-weight: 700; letter-spacing: -.1px; white-space: nowrap; }
.names .hover { width: 191px; background: #e9ecef; letter-spacing: .08px; }

/* spreadsheet window */
.window {
  position: absolute; left: 224px; top: 497px; width: 1424px; height: 560px; border: 1px solid #1b7c46; border-radius: 10px 10px 0 0; overflow: hidden;
  background: linear-gradient(93deg, #ebe8db 0, #f1ebe4 14%, #f2ebe5 45%, #ebe8db 60%, #eaead8 100%);
  box-shadow: 0 8px 42px rgba(0,0,0,.32);
}
.titlebar { height: 60px; display: flex; align-items: center; padding-left: 20px; font-size: 14px; }
.autosave { font-size: 13px; letter-spacing: -.35px; width: 55px; margin-left: 21px; }
.toggle { width: 54px; height: 25px; margin-left: 7px; border: 1.500px solid #666; border-radius: 13px; background: #fff; display: flex; align-items: center; font-size: 13px; color: #555; letter-spacing: -.3px; }
.toggle i { width: 18px; height: 18px; border-radius: 50%; background: #616161; margin: 0 6px 0 3px; }
.save { margin-left: 16px; }
.undo { margin-left: 16px; }
.c1 { margin-left: 8px; }
.c1 + .undo { margin-left: 13px; }
.dim { color: #b3afab; }
.qat { margin-left: 17px; }
.doc { margin-left: 30px; width: 160px; letter-spacing: .3px; white-space: nowrap; }
.docv { margin-left: 9px; }
.search { width: 383px; height: 40px; margin-left: 41px; margin-top: -1px; padding-left: 17px; display: flex; align-items: center; gap: 16px; background: #fafafa; border: 1px solid #d2cfc8; border-radius: 5px; box-shadow: 0 1px 2px rgba(0,0,0,.15); font-size: 16px; color: #6b6b6b; }
.avatar { width: 30px; height: 30px; line-height: 30px; margin-left: 222px; border-radius: 50%; background: #0078d7; color: #fff; text-align: center; font-size: 12.500px; }
.wmin { margin-left: 39px; }
.wmax { margin-left: 47px; }
.wclose { margin-left: 47px; }
.tabs { height: 38px; display: flex; align-items: center; padding: 0 15px 0 27px; font-size: 16px; white-space: nowrap; }
.tabs > span, .tabs > b { margin-right: 23.500px; line-height: 30px; }
.tabs > span:first-child { margin-right: 32px; }
.tabs b { letter-spacing: -.15px; height: 31px; border-bottom: 3px solid #0f703b; border-radius: 1px; margin-right: 22.500px; }
.tabs .wide { letter-spacing: .2px; }
.tabs .review { margin-right: 25.500px; }
.tabs .view { letter-spacing: .4px; }
.comments { margin-left: auto; margin-top: -3px; width: 117px; height: 30px; padding-left: 5px; display: flex; align-items: center; gap: 6px; background: #fff; border: 1px solid #8a8a8a; border-radius: 5px; letter-spacing: .15px; }
.share { margin-left: 10px; margin-top: -3px; width: 89px; height: 30px; display: flex; align-items: center; padding-left: 6px; gap: 5px; background: #107c41; color: #fff; border-radius: 5px; }
.share svg:last-child { margin-left: 2px; }

.ribbon { margin: 0 10px 0 10px; height: 124px; background: #fff; border-radius: 10px; box-shadow: 0 2px 4px rgba(0,0,0,.2); display: flex; font-size: 14.500px; white-space: nowrap; }
.group { height: 111px; margin-top: 6px; border-right: 1.500px solid #d0d0d0; flex: none; }
.group .body { height: 96px; margin-top: -4px; display: flex; }
.body.col { flex-direction: column; }
.row { height: 32px; display: flex; align-items: center; flex: none; }
.row i { display: flex; align-items: center; justify-content: center; flex: none; position: relative; }
.foot { height: 22px; display: flex; align-items: center; padding-top: 3px; padding-right: 3px; font-size: 12.500px; }
.foot span { flex: 1; text-align: center; padding-right: 5px; }
.clipboard .foot span { padding-right: 2px; }
.foot.plain { padding: 4px 0 0; }
.foot.plain span { padding: 0 1px 0 0; }
.w4 { width: 4px; } .w7 { width: 7px; } .w9 { width: 9px; } .w12 { width: 12px; } .w14 { width: 14px; } .w16 { width: 16px; }
.w18 { width: 18px; } .w20 { width: 20px; } .w22 { width: 22px; } .w26 { width: 26px; } .w28 { width: 28px; } .w30 { width: 30px; }
.w32 { width: 32px; } .w34 { width: 34px; } .w36 { width: 36px; } .w38 { width: 38px; } .w40 { width: 40px; }
.vs::before { content: ""; width: 1px; height: 30px; background: #d0d0d0; }
.clipboard { width: 139px; }
.paste { width: 48px; margin: 7px 2px 0 17px; display: flex; flex-direction: column; align-items: center; font-size: 14px; letter-spacing: -.4px; line-height: 27px; }
.paste svg:first-child { margin-left: 4px; }
.paste svg:last-child { margin-top: 4px; margin-right: 4px; }
.font { width: 292px; }
.font .body { padding-left: 9.500px; }
.align .body { padding-left: 8.500px; }
.row.r1 { height: 52px; }
.row.r2 { height: 28px; }
.box { height: 30px; border: 1px solid #8a8a8a; border-radius: 5px; display: flex; align-items: center; justify-content: space-between; padding: 0 3px 0 2px; font-size: 14px; color: #222; background: #fff; }
.fam { width: 144px; margin-right: 2px; letter-spacing: .2px; }
.size { width: 62px; }
.gen { width: 113px; margin-top: 2px; letter-spacing: -.2px; }
.big { font-size: 21px; color: #444; margin-top: -4px; padding-right: 3px; }
.mid { font-size: 18px; color: #444; margin-top: -2px; padding-right: 5px; }
.row .sup { position: absolute; top: 8px; right: 3px; }
.row .mid .sup { top: 4px; right: 0; }
.bold { font-weight: 700; font-size: 16px; color: #444; }
.ital { font: italic 18px "Liberation Serif", serif; color: #444; }
.und { font-size: 16px; color: #444; text-decoration: underline; text-underline-offset: 3px; }
.align { width: 176px; }
.align .up { top: -5px; }
.sel { width: 30px; height: 30px; margin-top: 2px; padding-top: 8px; border: 1px solid #666; border-radius: 5px; background: #e9e9e9; display: flex; align-items: center; justify-content: center; }
.wrap { font-size: 13.500px; line-height: 11px; width: 17px; color: #444; margin-top: -2px; }
.wraparrow { position: absolute; left: 15px; top: 10px; }
.rot { font-size: 13px; color: #444; transform: rotate(-45deg) translate(-1px, -3px); }
.rotarrow { position: absolute; right: 4px; top: 4px; }
.number { width: 133px; }
.number .body { padding-left: 10px; }
.pct { font-size: 22px; color: #444; }
.dec text { font: 11.500px "Open Sans", sans-serif; fill: #444; }
.tt { font: 700 13px "Open Sans", sans-serif; fill: #fff; }
.styles { width: 229px; }
.cells { width: 135px; }
.styles .body, .cells .body { padding-left: 15px; }
.styles .row span, .cells .row span { margin: 0 4px 0 5px; letter-spacing: -.1px; }
.styles .row .fat { letter-spacing: -.27px; }
.cells .row .fmt { letter-spacing: -.45px; }
.cells .row .ins { letter-spacing: -.6px; }
.far { margin-left: 17px; }
.editing { width: 132px; }
.editing .body { padding-left: 11px; }
.az text { font: 700 11px "Open Sans", sans-serif; }
.addins { width: 77px; }
.addins .body { flex-direction: column; align-items: center; padding-top: 7px; font-size: 14px; letter-spacing: .3px; line-height: 30px; }
.collapse { margin: 102px 12px 0 auto; }

.formula { display: flex; align-items: flex-start; padding: 9px 10px 0 10px; height: 95px; }
.fbox { background: #fff; border: 1px solid #d2d0cc; border-radius: 5px; display: flex; align-items: center; font-size: 14.500px; flex: none; }
.name { width: 127px; height: 30px; justify-content: space-between; padding: 0 6px; }
.vdots { margin: 9px 10px 0 11px; }
.fx { width: 92px; height: 30px; padding: 0 7px; justify-content: space-between; }
.fx em { font: italic 21px "Liberation Serif", serif; font-weight: 700; color: #444; line-height: 20px; margin-top: -4px; letter-spacing: -.5px; }
.input { width: 1153px; height: 78px; margin-left: 5px; align-items: flex-start; justify-content: space-between; padding: 5px 5px 0 13px; letter-spacing: .5px; }
.input svg { margin-top: 5px; }

.sheet { display: flex; align-items: flex-start; }
table { border-collapse: separate; border-spacing: 0; table-layout: fixed; width: 1397px; background: #fff; }
th { width: 80px; height: 24px; padding: 0; background: #efefef; font-weight: 400; font-size: 16px; line-height: 20px; color: #444; border-right: 1px solid #d0d0d0; border-bottom: 1px solid #a6a6a6; }
tbody th { border-right-color: #a6a6a6; border-bottom-color: #d0d0d0; }
.corner { width: 34px; background: linear-gradient(135deg, #efefef 0 50%, #d8d8d8 50%) 14px 5px / 16px 15px no-repeat #efefef; }
.last { width: 3px; }
thead .on, tbody .on { background: #e0e0e0; color: #217346; }
thead .on { border-right-color: #a6a6a6; }
td { height: 24px; padding: 1px 1px 0 3px; font: 17px/21px Lato, sans-serif; color: #111; letter-spacing: -.15px; border-right: 1px solid #dcdcdc; border-bottom: 1px solid #dcdcdc; overflow: hidden; white-space: nowrap; }
td.n { text-align: right; padding-right: 3px; letter-spacing: -.55px; }
td.t { letter-spacing: -.35px; }
td.d { letter-spacing: -.65px; }
td.w { letter-spacing: -.05px; }
td.spill { overflow: visible; border-right-color: transparent; }
td.cur { position: relative; overflow: visible; letter-spacing: -.2px; }
td.cur::before { content: ""; position: absolute; inset: -3px -2px -2px -2px; border: 2px solid #217346; }
td.cur::after { content: ""; position: absolute; right: -3px; bottom: -3px; width: 5px; height: 5px; background: #217346; outline: 1px solid #fff; }
.scroll { width: 21px; height: 200px; margin-left: 3px; background: #f5f5f5; border-radius: 11px 11px 0 0; display: flex; flex-direction: column; align-items: center; padding-top: 6px; }
.scroll i { width: 11px; height: 190px; margin-top: 6px; border-radius: 6px; background: #6f6f6f; }

/* taskbar */
.taskbar {
  position: relative; z-index: 2; height: 58px; border-top: 1px solid #bdbdbd; display: flex; flex: none;
  background: linear-gradient(90deg, #ecdcc8 0, #eddcc3 190px, #f2f0ec 255px, #f2f2f2 300px, #f2f2f2 1540px, #ecebdc 1625px, #e2e2c0 1690px, #dfe2bf 1840px, #dbe3c1 100%);
}
.weather { width: 490px; padding: 6px 0 0 25px; display: flex; position: relative; font-size: 15px; letter-spacing: -.3px; }
.weather div { margin-left: 5px; display: flex; flex-direction: column; line-height: 20px; margin-top: 1px; }
.soft { color: #5c5c5c; }
.badge { position: absolute; border-radius: 50%; height: 21px; min-width: 20px; line-height: 20px; text-align: center; color: #fff; font-size: 13px; font-weight: 400; letter-spacing: 0; }
.red { left: 39px; top: 6px; background: #c42b1c; }
.start { width: 55px; padding-top: 15px; display: flex; justify-content: center; }
.tsearch { width: 274px; height: 39px; margin: 9px 3px 0 4px; background: #fbfbfb; border: 1px solid #dedede; border-bottom-color: #bbb; border-radius: 20px; display: flex; align-items: center; padding-left: 13px; font-size: 16px; color: #5f5f5f; }
.tsearch span { margin-left: 12px; flex: 1; }
.gift { margin-right: 13px; }
.apps-row { display: flex; }
.apps-row > div { width: 55px; height: 57px; display: flex; align-items: center; justify-content: center; position: relative; padding-bottom: 1px; }
.run::after { content: ""; position: absolute; left: 24px; bottom: 4px; width: 8px; height: 4px; border-radius: 2px; background: #868686; }
.yellow { left: 29px; top: 8px; background: #ffc20e; }
.blue { left: 26px; top: 8px; width: 23px; background: #0078d4; line-height: 21px; font-size: 14px; }
.orange { left: 29px; top: 8px; background: #ef6c00; font-size: 11px; }
.active::before { content: ""; position: absolute; inset: 4px 3px; border: 1px solid #e3e3e3; border-radius: 5px; background: #fafafa; }
.active svg { position: relative; }
.active::after { content: ""; position: absolute; left: 18px; bottom: 4px; width: 20px; height: 4px; border-radius: 2px; background: #0078d4; }
.tray { margin-left: 142px; display: flex; align-items: center; font-size: 15px; width: 323px; padding-bottom: 2px; }
.tray i { display: flex; justify-content: center; padding-top: 2px; }
.lang { width: 56px; text-align: center; display: flex; flex-direction: column; line-height: 20px; letter-spacing: -.4px; }
.clock { flex: 1; display: flex; flex-direction: column; text-align: right; line-height: 20px; letter-spacing: -.15px; white-space: nowrap; }
.time { letter-spacing: -.6px; }
```
